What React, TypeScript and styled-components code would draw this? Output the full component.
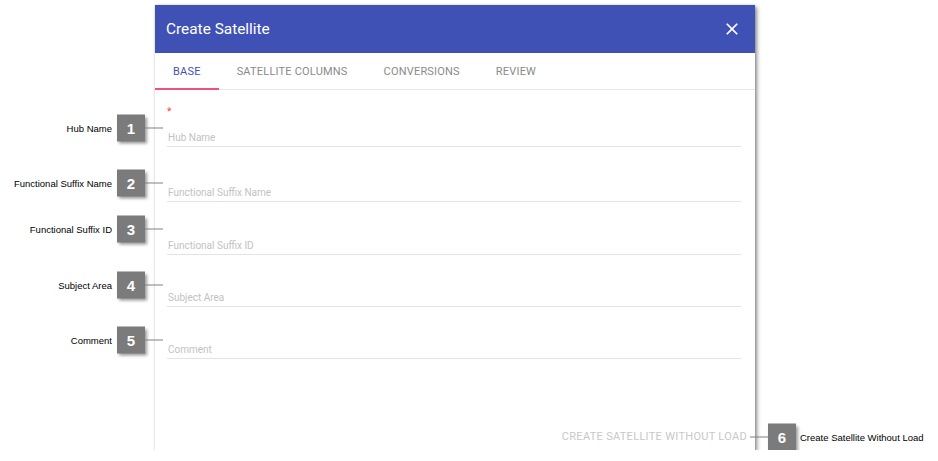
import React from 'react';
import styled, { createGlobalStyle } from 'styled-components';

const GlobalStyle = createGlobalStyle`
  html, body {
    margin: 0;
    padding: 0;
    background: #ffffff;
  }
  body {
    font-family: Roboto, "Liberation Sans", Arial, sans-serif;
  }
`;

const Page = styled.div`
  padding: 5px 0 0 155px;
`;

const Dialog = styled.div`
  width: 600px;
  height: 445px;
  display: flex;
  flex-direction: column;
  background: #ffffff;
  box-shadow: 2px 2px 4px rgba(0, 0, 0, 0.45), 0 0 2px rgba(0, 0, 0, 0.12);
`;

const Header = styled.div`
  height: 48px;
  flex-shrink: 0;
  display: flex;
  align-items: center;
  justify-content: space-between;
  padding: 0 11px 0 11px;
  background: #3f51b5;
`;

const Title = styled.div`
  color: #ffffff;
  font-size: 15.4px;
  font-weight: 400;
`;

const CloseButton = styled.button`
  width: 24px;
  height: 24px;
  padding: 0;
  border: 0;
  background: transparent;
  display: flex;
  align-items: center;
  justify-content: center;
  cursor: pointer;
`;

const Tabs = styled.div`
  height: 36px;
  flex-shrink: 0;
  display: flex;
  border-bottom: 1px solid #e6e6e6;
`;

const Tab = styled.div<{ $active?: boolean }>`
  position: relative;
  display: flex;
  align-items: center;
  padding: 0 18px;
  font-size: 11px;
  color: ${(p) => (p.$active ? '#3f51b5' : '#8a8a8a')};
  text-transform: uppercase;
  letter-spacing: 0.2px;

  &::after {
    content: '';
    display: ${(p) => (p.$active ? 'block' : 'none')};
    position: absolute;
    left: 0;
    right: 0;
    bottom: -1px;
    height: 2px;
    background: #f0507c;
  }
`;

const Form = styled.div`
  display: flex;
  flex-direction: column;
  padding: 4px 14px 0 12px;
`;

const Field = styled.div<{ $h: number }>`
  position: relative;
  height: ${(p) => p.$h}px;
  display: flex;
  flex-direction: column;
  justify-content: flex-end;
`;

const Required = styled.span`
  position: absolute;
  top: 12px;
  left: 0;
  color: #f44336;
  font-size: 10px;
`;

const Input = styled.input`
  border: 0;
  border-bottom: 1px solid #e3e3e3;
  padding: 0 0 3px 1px;
  font-family: inherit;
  font-size: 10px;
  color: #333;
  outline: none;
  background: transparent;

  &::placeholder {
    color: #c2c2c2;
  }
`;

const Footer = styled.div`
  margin-top: auto;
  display: flex;
  justify-content: flex-end;
  padding: 0 8px 7px 0;
`;

const TextButton = styled.button`
  position: relative;
  border: 0;
  background: transparent;
  padding: 0;
  font-family: inherit;
  font-size: 11px;
  color: #c8c8c8;
  text-transform: uppercase;
  letter-spacing: 0.3px;
  cursor: default;
`;

/* annotation callouts around the screenshot */
const CalloutLeft = styled.div<{ $lift: number }>`
  position: absolute;
  right: calc(100% + 4px);
  bottom: ${(p) => p.$lift}px;
  transform: translateY(50%);
  display: flex;
  align-items: center;
  white-space: nowrap;
`;

const CalloutRight = styled.div`
  position: absolute;
  left: calc(100% + 3px);
  top: 50%;
  transform: translateY(-50%);
  display: flex;
  align-items: center;
  white-space: nowrap;
`;

const CalloutLabel = styled.span<{ $side: 'left' | 'right' }>`
  font-family: "Liberation Sans", Arial, sans-serif;
  font-size: 9.5px;
  color: #000;
  text-transform: none;
  letter-spacing: 0;
  ${(p) => (p.$side === 'left' ? 'margin-right: 5px;' : 'margin-left: 4px;')}
`;

const Badge = styled.span`
  width: 28px;
  height: 27px;
  display: flex;
  align-items: center;
  justify-content: center;
  background: #7b7b7b;
  color: #ffffff;
  font-family: "Liberation Sans Narrow", "Liberation Sans", Arial, sans-serif;
  font-size: 15px;
  font-weight: 700;
  letter-spacing: 0;
  box-shadow: 2px 2px 3px rgba(0, 0, 0, 0.4);
`;

const Leader = styled.span<{ $w: number }>`
  width: ${(p) => p.$w}px;
  height: 1px;
  background: #808080;
`;

const CloseIcon = () => (
  <svg width="20" height="20" viewBox="0 0 24 24" fill="#ffffff">
    <path d="M19 6.41L17.59 5 12 10.59 6.41 5 5 6.41 10.59 12 5 17.59 6.41 19 12 13.41 17.59 19 19 17.59 13.41 12z" />
  </svg>
);

const fields = [
  { n: 1, label: 'Hub Name', h: 53, lift: 19, required: true },
  { n: 2, label: 'Functional Suffix Name', h: 55, lift: 19 },
  { n: 3, label: 'Functional Suffix ID', h: 53, lift: 26 },
  { n: 4, label: 'Subject Area', h: 52, lift: 22 },
  { n: 5, label: 'Comment', h: 52, lift: 19 },
];

const tabs = ['Base', 'Satellite Columns', 'Conversions', 'Review'];

export default function App() {
  return (
    <Page>
      <GlobalStyle />
      <Dialog>
        <Header>
          <Title>Create Satellite</Title>
          <CloseButton aria-label="close">
            <CloseIcon />
          </CloseButton>
        </Header>
        <Tabs>
          {tabs.map((t, i) => (
            <Tab key={t} $active={i === 0}>
              {t}
            </Tab>
          ))}
        </Tabs>
        <Form>
          {fields.map((f) => (
            <Field key={f.n} $h={f.h}>
              {f.required && <Required>*</Required>}
              <Input placeholder={f.label} />
              <CalloutLeft $lift={f.lift}>
                <CalloutLabel $side="left">{f.label}</CalloutLabel>
                <Badge>{f.n}</Badge>
                <Leader $w={18} />
              </CalloutLeft>
            </Field>
          ))}
        </Form>
        <Footer>
          <TextButton>
            Create Satellite without load
            <CalloutRight>
              <Leader $w={18} />
              <Badge>6</Badge>
              <CalloutLabel $side="right">Create Satellite Without Load</CalloutLabel>
            </CalloutRight>
          </TextButton>
        </Footer>
      </Dialog>
    </Page>
  );
}
